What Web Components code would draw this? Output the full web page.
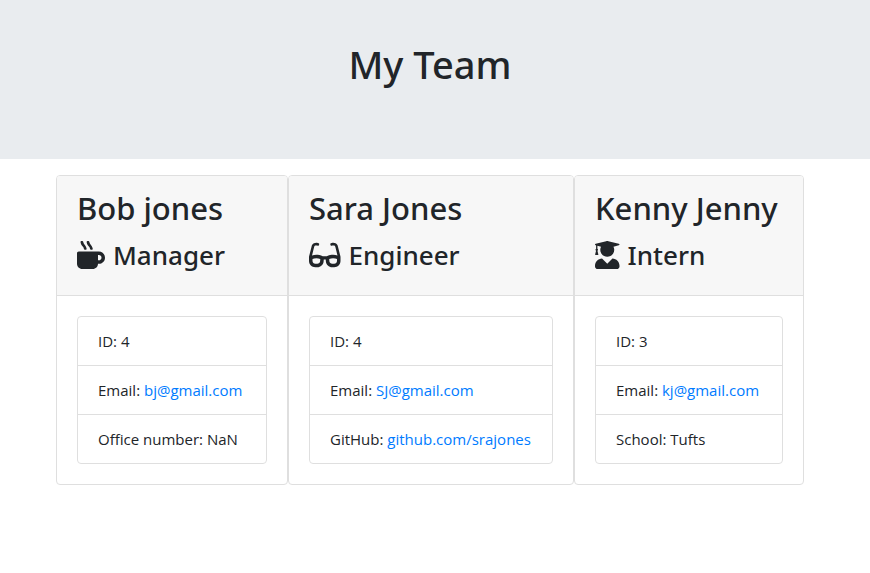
<!DOCTYPE html>
<html lang="en">
<head>
<meta charset="utf-8">
<meta name="viewport" content="width=device-width, initial-scale=1">
<title>My Team</title>
<style>
body { margin: 0; background: #fff; color: #212529; font: 15px/24px "Open Sans", "Noto Sans", sans-serif; }
</style>
</head>
<body>
<team-banner>My Team</team-banner>
<team-grid>
  <team-card name="Bob jones" role-name="Manager" icon="mug">
    <team-field label="ID">4</team-field>
    <team-field label="Email" href="mailto:bj@gmail.com">bj@gmail.com</team-field>
    <team-field label="Office number">NaN</team-field>
  </team-card>
  <team-card name="Sara Jones" role-name="Engineer" icon="glasses">
    <team-field label="ID">4</team-field>
    <team-field label="Email" href="mailto:SJ@gmail.com">SJ@gmail.com</team-field>
    <team-field label="GitHub" href="https://github.com/srajones">github.com/srajones</team-field>
  </team-card>
  <team-card name="Kenny Jenny" role-name="Intern" icon="graduate">
    <team-field label="ID">3</team-field>
    <team-field label="Email" href="mailto:kj@gmail.com">kj@gmail.com</team-field>
    <team-field label="School">Tufts</team-field>
  </team-card>
</team-grid>
<script>
const ICONS = {
  mug: [512, "M127.1 146.5c1.3 7.7 8 13.5 16 13.5h16.5c9.8 0 17.6-8.5 16.3-18-3.8-28.2-16.4-54.2-36.6-74.7-14.4-14.7-23.6-33.3-26.4-53.5C111.8 5.9 105 0 96.8 0H80.4C70.6 0 63 8.5 64.1 18c3.9 31.9 18 61.3 40.6 84.4 12 12.2 19.7 27.5 22.4 44.1zm112 0c1.3 7.7 8 13.5 16 13.5h16.5c9.8 0 17.6-8.5 16.3-18-3.8-28.2-16.4-54.2-36.6-74.7-14.4-14.7-23.6-33.3-26.4-53.5C223.8 5.9 217 0 208.8 0h-16.4c-9.8 0-17.5 8.5-16.3 18 3.9 31.9 18 61.3 40.6 84.4 12 12.2 19.7 27.5 22.4 44.1zM400 192H32c-17.7 0-32 14.3-32 32v192c0 53 43 96 96 96h192c53 0 96-43 96-96h16c61.8 0 112-50.2 112-112s-50.2-112-112-112zm0 160h-16v-96h16c26.5 0 48 21.5 48 48s-21.5 48-48 48z"],
  glasses: [576, "M574.1 280.37L528.75 98.66c-5.91-23.7-21.59-44.05-43-55.81-21.44-11.73-46.97-14.11-70.19-6.33l-15.25 5.08c-8.39 2.79-12.92 11.86-10.12 20.24l5.06 15.18c2.79 8.38 11.85 12.91 20.23 10.12l13.18-4.39c10.87-3.62 23-3.57 33.16 1.73 10.29 5.37 17.57 14.56 20.37 25.82l38.46 153.82c-22.19-6.81-49.79-12.46-81.2-12.46-34.77 0-73.98 7.02-114.85 26.74h-73.18c-40.87-19.74-80.08-26.75-114.86-26.75-31.42 0-59.02 5.65-81.21 12.46l38.46-153.83c2.79-11.25 10.09-20.45 20.38-25.81 10.16-5.3 22.28-5.35 33.15-1.73l13.17 4.39c8.38 2.79 17.44-1.74 20.23-10.12l5.06-15.18c2.8-8.38-1.73-17.45-10.12-20.24l-15.25-5.08c-23.22-7.78-48.75-5.41-70.19 6.33-21.41 11.77-37.09 32.11-43 55.8L1.9 280.37A64.218 64.218 0 0 0 0 295.86v70.25C0 429.01 51.58 480 115.2 480h37.12c60.28 0 110.37-45.94 114.88-105.37l2.93-38.63h35.75l2.93 38.63C313.31 434.06 363.4 480 423.68 480h37.12c63.62 0 115.2-50.99 115.2-113.88v-70.25c0-5.23-.64-10.43-1.9-15.5zm-370.72 89.42c-1.97 25.91-24.4 46.21-51.06 46.21H115.2C86.97 416 64 393.62 64 366.11v-37.54c18.12-6.49 43.42-12.92 72.58-12.92 23.86 0 47.26 4.33 69.93 12.92l-3.13 41.22zM512 366.12c0 27.51-22.97 49.88-51.2 49.88h-37.12c-26.67 0-49.1-20.3-51.06-46.21l-3.13-41.22c22.67-8.59 46.08-12.92 69.95-12.92 29.12 0 54.43 6.44 72.55 12.93v37.54z"],
  graduate: [448, "M319.4 320.6L224 416l-95.4-95.4C57.1 323.7 0 382.2 0 454.4v9.6c0 26.5 21.5 48 48 48h352c26.5 0 48-21.5 48-48v-9.6c0-72.2-57.1-130.7-128.6-133.8zM13.6 79.8l6.4 1.5v58.4c-7 4.2-12 11.5-12 20.3 0 8.4 4.6 15.4 11.1 19.7L3.5 242c-1.7 6.9 2.1 14 7.6 14h41.8c5.5 0 9.3-7.1 7.6-14l-15.6-62.3C51.4 175.4 56 168.4 56 160c0-8.8-5-16.1-12-20.3V87.1l66 15.9c-8.6 17.2-14 36.4-14 57 0 70.7 57.3 128 128 128s128-57.3 128-128c0-20.6-5.3-39.8-14-57l96.3-23.2c18.2-4.4 18.2-27.1 0-31.5l-190.4-46c-13-3.1-26.7-3.1-39.7 0L13.6 48.2c-18.1 4.4-18.1 27.2 0 31.6z"]
};

customElements.define("team-banner", class extends HTMLElement {
  constructor() {
    super();
    this.attachShadow({ mode: "open" }).innerHTML = `
      <style>
        :host { display: block; background: #e9ecef; padding: 40px 42px 71px 32px; text-align: center; }
        h1 { margin: 0; font: 500 38px/48px "Noto Sans", sans-serif; }
      </style>
      <header><h1><slot></slot></h1></header>`;
  }
});

customElements.define("team-grid", class extends HTMLElement {
  constructor() {
    super();
    this.attachShadow({ mode: "open" }).innerHTML = `
      <style>
        :host { display: block; padding: 16px 66px 16px 56px; }
        main { display: grid; grid-template-columns: 232fr 286fr 230fr; }
        @media (max-width: 767px) {
          :host { padding: 16px; }
          main { grid-template-columns: 1fr; gap: 16px; }
        }
      </style>
      <main><slot></slot></main>`;
  }
});

customElements.define("team-card", class extends HTMLElement {
  connectedCallback() {
    const [width, path] = ICONS[this.getAttribute("icon")];
    this.attachShadow({ mode: "open" }).innerHTML = `
      <style>
        :host { display: block; box-sizing: border-box; border: 1px solid #dfdfdf; border-radius: 4px; overflow: hidden; }
        header { background: #f7f7f7; border-bottom: 1px solid #dfdfdf; padding: 12px 20px 13px; }
        h2, h3 { margin: 0 0 8px; white-space: nowrap; }
        h2 { font: 500 31px/40px "Noto Sans", sans-serif; }
        h3 { display: flex; align-items: center; gap: 8px; font: 500 26px/38px "Noto Sans", sans-serif; }
        svg { height: 28px; fill: currentColor; flex: none; }
        .body { padding: 20px; }
        .list { border: 1px solid #dfdfdf; border-radius: 4px; }
      </style>
      <header>
        <h2>${this.getAttribute("name")}</h2>
        <h3><svg viewBox="0 0 ${width} 512" aria-hidden="true"><path d="${path}"/></svg><span>${this.getAttribute("role-name")}</span></h3>
      </header>
      <div class="body"><div class="list" role="list"><slot></slot></div></div>`;
  }
});

customElements.define("team-field", class extends HTMLElement {
  connectedCallback() {
    this.setAttribute("role", "listitem");
    const href = this.getAttribute("href");
    this.attachShadow({ mode: "open" }).innerHTML = `
      <style>
        :host { display: block; padding: 12px 20px; border-bottom: 1px solid #dfdfdf; white-space: nowrap; }
        :host(:last-child) { border-bottom: 0; }
        a { color: #007bff; text-decoration: none; }
        a:hover { text-decoration: underline; }
      </style>${this.getAttribute("label")}: ${href ? `<a href="${href}"><slot></slot></a>` : "<slot></slot>"}`;
  }
});
</script>
</body>
</html>
